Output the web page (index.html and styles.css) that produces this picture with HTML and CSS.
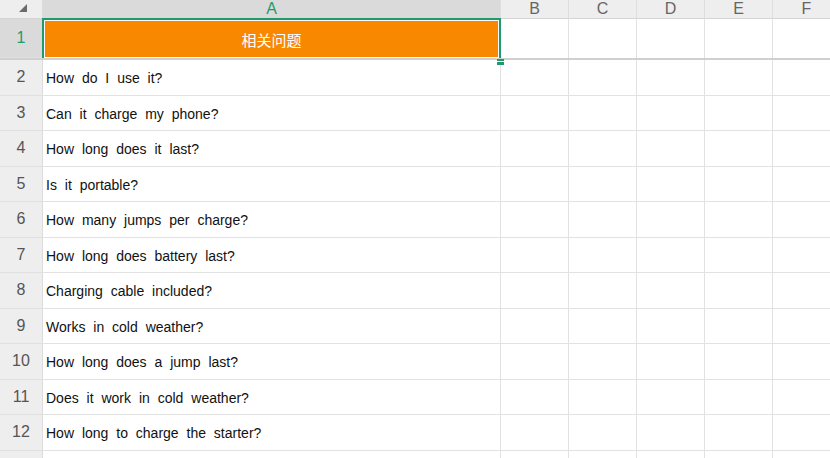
FILE: index.html
```html
<!DOCTYPE html>
<html lang="zh">
<head>
    <meta charset="UTF-8">
    <title>Sheet</title>
    <link rel="stylesheet" href="styles.css">
</head>
<body>
    <div class="sheet">
        <!-- column headers -->
        <div class="row head-row">
            <div class="corner"><span class="tri"></span></div>
            <div class="col-head col-a active">A</div>
            <div class="col-head col-n">B</div>
            <div class="col-head col-n">C</div>
            <div class="col-head col-n">D</div>
            <div class="col-head col-n">E</div>
            <div class="col-head col-n">F</div>
        </div>

        <!-- frozen first row -->
        <div class="row first-row">
            <div class="row-head active">1</div>
            <div class="cell col-a title-cell">
                <div class="fill">相关问题</div>
                <span class="handle"></span>
            </div>
            <div class="cell col-n"></div>
            <div class="cell col-n"></div>
            <div class="cell col-n"></div>
            <div class="cell col-n"></div>
            <div class="cell col-n"></div>
        </div>
        <div class="freeze"></div>

        <div class="row"><div class="row-head">2</div><div class="cell col-a">How do I use it?</div><div class="cell col-n"></div><div class="cell col-n"></div><div class="cell col-n"></div><div class="cell col-n"></div><div class="cell col-n"></div></div>
        <div class="row"><div class="row-head">3</div><div class="cell col-a">Can it charge my phone?</div><div class="cell col-n"></div><div class="cell col-n"></div><div class="cell col-n"></div><div class="cell col-n"></div><div class="cell col-n"></div></div>
        <div class="row"><div class="row-head">4</div><div class="cell col-a">How long does it last?</div><div class="cell col-n"></div><div class="cell col-n"></div><div class="cell col-n"></div><div class="cell col-n"></div><div class="cell col-n"></div></div>
        <div class="row"><div class="row-head">5</div><div class="cell col-a">Is it portable?</div><div class="cell col-n"></div><div class="cell col-n"></div><div class="cell col-n"></div><div class="cell col-n"></div><div class="cell col-n"></div></div>
        <div class="row"><div class="row-head">6</div><div class="cell col-a">How many jumps per charge?</div><div class="cell col-n"></div><div class="cell col-n"></div><div class="cell col-n"></div><div class="cell col-n"></div><div class="cell col-n"></div></div>
        <div class="row"><div class="row-head">7</div><div class="cell col-a">How long does battery last?</div><div class="cell col-n"></div><div class="cell col-n"></div><div class="cell col-n"></div><div class="cell col-n"></div><div class="cell col-n"></div></div>
        <div class="row"><div class="row-head">8</div><div class="cell col-a">Charging cable included?</div><div class="cell col-n"></div><div class="cell col-n"></div><div class="cell col-n"></div><div class="cell col-n"></div><div class="cell col-n"></div></div>
        <div class="row"><div class="row-head">9</div><div class="cell col-a">Works in cold weather?</div><div class="cell col-n"></div><div class="cell col-n"></div><div class="cell col-n"></div><div class="cell col-n"></div><div class="cell col-n"></div></div>
        <div class="row"><div class="row-head">10</div><div class="cell col-a">How long does a jump last?</div><div class="cell col-n"></div><div class="cell col-n"></div><div class="cell col-n"></div><div class="cell col-n"></div><div class="cell col-n"></div></div>
        <div class="row"><div class="row-head">11</div><div class="cell col-a">Does it work in cold weather?</div><div class="cell col-n"></div><div class="cell col-n"></div><div class="cell col-n"></div><div class="cell col-n"></div><div class="cell col-n"></div></div>
        <div class="row"><div class="row-head">12</div><div class="cell col-a">How long to charge the starter?</div><div class="cell col-n"></div><div class="cell col-n"></div><div class="cell col-n"></div><div class="cell col-n"></div><div class="cell col-n"></div></div>
        <div class="row"><div class="row-head"></div><div class="cell col-a"></div><div class="cell col-n"></div><div class="cell col-n"></div><div class="cell col-n"></div><div class="cell col-n"></div><div class="cell col-n"></div></div>
    </div>
</body>
</html>
```

FILE: styles.css
```css
body {
    margin: 0;
    background: #fff;
    font-family: "Liberation Sans", "Noto Sans CJK SC", Arial, sans-serif;
    overflow: hidden;
}
.sheet {
    width: 830px;
    height: 458px;
    overflow: hidden;
}
.row {
    display: flex;
    height: 35.5px;
    width: 900px;
}
.head-row {
    height: 19px;
}
.first-row {
    height: 39px;
    position: relative;
    z-index: 1;
}
.freeze {
    height: 2px;
    width: 900px;
    background: #d0d0d0;
}

/* headers */
.corner {
    width: 43px;
    flex: none;
    background: #eeeeee;
    border-right: 1px solid #dcdcdc;
    border-bottom: 1px solid #d4d4d4;
    box-sizing: border-box;
    position: relative;
}
.tri {
    position: absolute;
    left: 19px;
    top: 4px;
    width: 0;
    height: 0;
    border-left: 8px solid transparent;
    border-bottom: 8px solid #6a6a6a;
}
.col-head {
    flex: none;
    box-sizing: border-box;
    background: #eeeeee;
    border-right: 1px solid #dedede;
    border-bottom: 1px solid #d4d4d4;
    color: #666;
    font-size: 16px;
    line-height: 18px;
    text-align: center;
}
.col-head.active {
    background: #dadada;
    color: #1f9a68;
}
.col-a {
    width: 458px;
}
.col-n {
    width: 68px;
}
.row-head {
    width: 43px;
    flex: none;
    box-sizing: border-box;
    background: #eeeeee;
    border-right: 1px solid #dcdcdc;
    border-bottom: 1px solid #e0e0e0;
    color: #555;
    font-size: 16px;
    display: flex;
    align-items: center;
    justify-content: center;
}
.row-head.active {
    background: #dadada;
    color: #1f9a68;
}

/* cells */
.cell {
    flex: none;
    box-sizing: border-box;
    border-right: 1px solid #e2e2e2;
    border-bottom: 1px solid #e2e2e2;
    font-size: 14px;
    color: #111;
    word-spacing: 4px;
    padding-left: 3px;
    padding-top: 2px;
    display: flex;
    align-items: center;
}
.first-row .cell {
    border-bottom: none;
}
.title-cell {
    position: relative;
    padding: 0;
    border: 2px solid #1f9a68;
    margin-left: -1px;
    margin-top: -1px;
    height: 40px;
    width: 459px;
    background: #fff;
}
.fill {
    flex: 1;
    align-self: stretch;
    margin: 1px;
    background: #f88800;
    color: #fff;
    font-size: 15px;
    display: flex;
    align-items: center;
    justify-content: center;
    word-spacing: 0;
}
.handle {
    position: absolute;
    right: -5px;
    bottom: -4px;
    width: 7px;
    height: 2px;
    background: #1f9a68;
    border-bottom: 1px solid #fff;
    box-shadow: 0 3px 0 #1f9a68;
}
```
